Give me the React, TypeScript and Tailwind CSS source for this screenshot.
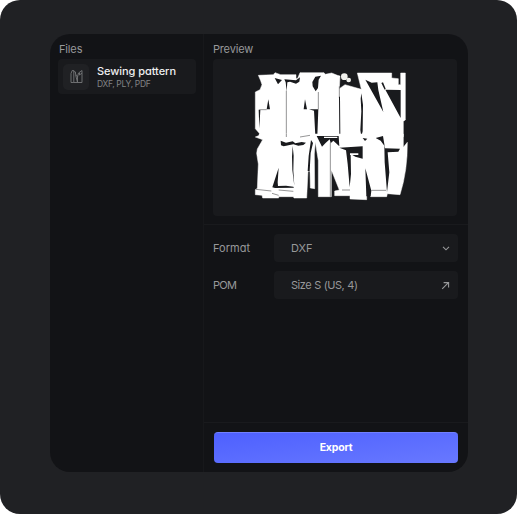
import type { ReactNode } from "react";

function PatternPieces() {
  return (
    <svg className="h-[136px] w-[165px]" viewBox="0 0 495 408" role="img" aria-label="Sewing pattern pieces">
      <g>
        <path
          fill="#fff"
          stroke="#fff"
          strokeWidth="1.5"
          strokeLinejoin="round"
          d="M25 22 70 20 75 14 92 20H138V32L143 31 150 14H222L226 19 245 15 262 22 270 24 268 62 285 50 334 64 322 15H425V30L445 32V50H452V15H466V156L460 160V206H28V196L16 182V72L30 65 36 50 32 38Z"
        />
        <g fill="#191a1d">
          <path d="M74 30 96 36 84 49ZM103 34 138 37 150 28 148 41 138 47 120 41 112 43 110 70 107 43ZM196 26 213 23 206 35 204 60 197 70 188 55 187 42Z" />
          <path d="m55 94 5 30H50ZM165 94l6 30h-10ZM177 124h28l-3 80h-6l-4-76ZM26 125l5 1-3 55ZM334 76l5 34-1 80-4 16-3-20 3-56-2-38Z" />
          <path d="M346 35 365 44 382 43 385 66 400 132ZM406 65 452 66V150ZM394 45l5-2 8 19-3 3ZM267 86h3l1 118h-3Z" />
        </g>
        <g fill="none" stroke="#191a1d" strokeWidth="1.4">
          <path d="M109 68V204M205 72V124M268 55V90M28 125H50" />
        </g>
        <circle cx="283" cy="26" r="10" fill="#f1f1ed" />
        <circle cx="296" cy="36" r="7" fill="#f1f1ed" />
      </g>
      <g transform="translate(0 198)">
        <path
          fill="#fff"
          stroke="#fff"
          strokeWidth="1.5"
          strokeLinejoin="round"
          d="M28 0V4L16 9 38 17 22 45 20 58 25 90 22 163 16 167V182L36 184 38 192H86V188H130L132 192H170L174 112H180L181 162 194 164 193 60 196 24 205 80V188H244V108L268 168 254 171V185H300V195L350 197V184H360L362 188H410L412 179 450 182Q473 110 472 25L460 40V0Z"
        />
        <g fill="#191a1d">
          <path d="m92 20 16 6 20-4 8 6 19-4 13 2-8 7-15 2-15-4-29 6-8-3ZM86 101 83 145 84 156 108 155 130 158 132 161 75 162 67 160ZM128 35l3 30-1 45 3 46-6-48-1-40Z" />
          <path d="m183 18-7 48-3 45 6 1 3-55 7-30ZM200 6 266 6 268 37 250 20 242 28 239 16 226 28 216 38Z" />
          <path d="M268 41 338 37V74L316 68 302 60 303 120 299 160 293 90 288 49ZM338 12l14 2-7 7ZM346 103l18 67-2 17h-13Z" />
          <path d="m377 12 22-6 6 37 45 1-5 9-32 2 5 60-7 60-7-90-1-50-11-15Z" />
        </g>
        <g fill="none" stroke="#191a1d" strokeWidth="1.4">
          <path d="M109 0V9M241 26V188M18 166 64 171M86 168 130 172M66 178 86 184M276 168H300M364 169H408M150 9 180 4" />
        </g>
        <path fill="#fff" d="M300 58h25v5h-25ZM222 8h40v4h-40Z" />
      </g>
    </svg>
  );
}

function PatternIcon() {
  return (
    <svg className="h-[15px] w-[13px]" viewBox="0 0 13 15" fill="none" stroke="#77787b" strokeWidth=".9" strokeLinejoin="round">
      <path d="M1 13.5V4.5l1.2-3h1.6v12ZM3.8 2.5 5.5 3v2.5L7.5 13.5H3.8M7.5 13.5V8L6.2 5.5M7.5 8l1-4L12 1.5v12H7.5M9.5 4v2L12 4" />
    </svg>
  );
}

function Chevron() {
  return (
    <svg className="h-[5px] w-[8px]" viewBox="0 0 8 5" fill="none" stroke="currentColor" strokeWidth="1.1">
      <path d="m1 .8 3 3 3-3" />
    </svg>
  );
}

function Arrow() {
  return (
    <svg className="size-[9px]" viewBox="0 0 9 9" fill="none" stroke="currentColor" strokeWidth="1.1">
      <path d="m1.2 7.8 6-6M2.6 1.6h5v5" />
    </svg>
  );
}

function Field({ label, value, children }: { label: ReactNode; value: ReactNode; children: ReactNode }) {
  return (
    <div className="flex h-7 items-center">
      <span className="w-[61px] text-[11px] leading-4 text-[#97989a]">{label}</span>
      <button className="flex h-full w-[184px] items-center justify-between rounded-[4px] bg-[#191a1d] pr-[8px] pl-[17px] text-[11px] text-[#97989a]">
        <span>{value}</span>
        {children}
      </button>
    </div>
  );
}

export default function App() {
  return (
    <div className="h-[514px] w-[520px] bg-white font-['Inter','Liberation_Sans',sans-serif] [font-feature-settings:'cv11']">
      <main className="h-[514px] w-[517px] rounded-[20px] bg-[#202124] pt-[34px] pl-[50px]">
        <div className="flex h-[438px] w-[418px] overflow-hidden rounded-[20px] bg-[#121316]">
          <aside className="w-[154px] border-r border-[#17181b] pt-[7px] pl-2">
            <h2 className="pl-px text-[11px] leading-4 tracking-[-0.15px] text-[#97989a]">Files</h2>
            <div className="mt-[2px] flex h-[35px] w-[138px] items-center rounded-[4px] bg-[#191a1d] pl-[5px]">
              <div className="flex size-[26px] items-center justify-center rounded-[5px] bg-[#202124]">
                <PatternIcon />
              </div>
              <div className="ml-2 pt-px whitespace-nowrap">
                <div className="text-[11px] leading-[14px] font-medium tracking-[-0.06px] text-[#eeeeef]">Sewing pattern</div>
                <div className="text-[8.5px] leading-[13px] tracking-[-0.36px] text-[#818285]">DXF, PLY, PDF</div>
              </div>
            </div>
          </aside>
          <section className="flex flex-1 flex-col">
            <div className="h-[191px] border-b border-[#191a1d] pt-[7px] pl-[9px]">
              <h2 className="text-[11px] leading-4 tracking-[-0.18px] text-[#97989a]">Preview</h2>
              <div className="mt-[2px] h-[157px] w-[244px] rounded-[4px] bg-[#191a1d] pt-[9px] pl-[37px]">
                <PatternPieces />
              </div>
            </div>
            <div className="flex flex-1 flex-col gap-[9px] pt-[9px] pl-[9px]">
              <Field label={<span className="tracking-[0.05px]">Format</span>} value="DXF">
                <Chevron />
              </Field>
              <Field
                label={<span className="tracking-[-0.7px]">POM</span>}
                value={<span className="tracking-[-0.5px] [word-spacing:0.5px]">Size S (US, 4)</span>}
              >
                <Arrow />
              </Field>
            </div>
            <footer className="h-[50px] border-t border-[#191a1d] pt-[9px] pl-[10px]">
              <button className="h-[31px] w-[244px] rounded-[4px] border-t border-[#7180ff] bg-linear-to-br from-[#4e60ff] to-[#6878ff] text-[10.5px] font-bold tracking-[-0.2px] text-white">
                Export
              </button>
            </footer>
          </section>
        </div>
      </main>
    </div>
  );
}
